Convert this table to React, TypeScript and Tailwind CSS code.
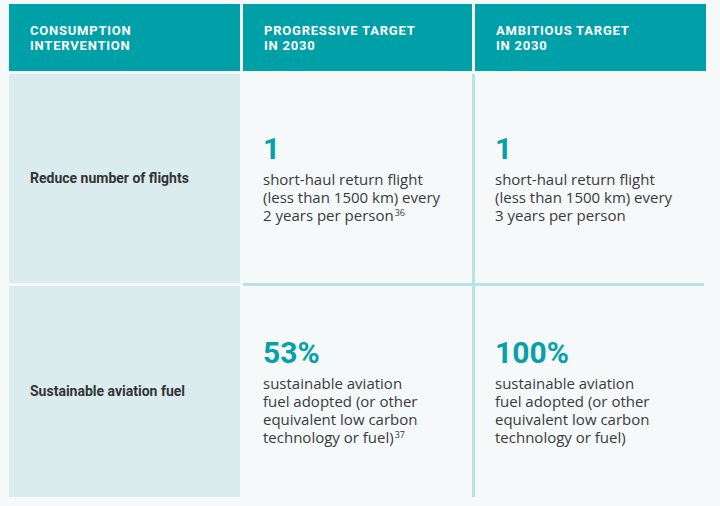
import { Fragment } from "react";

const font = { fontFamily: "Roboto, 'Liberation Sans', sans-serif" };
const body = { fontFamily: "'Open Sans', 'Liberation Sans', sans-serif" };

type Target = { value: string; lines: string[]; note?: string };
type Row = { label: string; progressive: Target; ambitious: Target; height: string };

const rows: Row[] = [
  {
    label: "Reduce number of flights",
    progressive: {
      value: "1",
      lines: ["short-haul return flight", "(less than 1500 km) every", "2 years per person"],
      note: "36",
    },
    ambitious: {
      value: "1",
      lines: ["short-haul return flight", "(less than 1500 km) every", "3 years per person"],
    },
    height: "h-[209px]",
  },
  {
    label: "Sustainable aviation fuel",
    progressive: {
      value: "53%",
      lines: ["sustainable aviation", "fuel adopted (or other", "equivalent low carbon", "technology or fuel)"],
      note: "37",
    },
    ambitious: {
      value: "100%",
      lines: ["sustainable aviation", "fuel adopted (or other", "equivalent low carbon", "technology or fuel)"],
    },
    height: "h-[211px]",
  },
];

const headers = [
  ["Consumption", "intervention"],
  ["Progressive target", "in 2030"],
  ["Ambitious target", "in 2030"],
];

function TargetCell({ value, lines, note }: Target) {
  return (
    <div className="flex h-full flex-col justify-center bg-[#f5f9fa] pl-5 pr-2">
      <div className="text-[30px] font-bold leading-none text-[#05a0a8]">{value}</div>
      <p className="mt-[6px] whitespace-nowrap text-[15px] leading-[18px] text-[#3a3a3a]" style={body}>
        {lines.map((l, i) => (
          <Fragment key={i}>
            {i > 0 && <br />}
            {l}
          </Fragment>
        ))}
        {note && <sup className="ml-px text-[9px]">{note}</sup>}
      </p>
    </div>
  );
}

export default function App() {
  return (
    <div className="h-[506px] w-[720px] bg-[#f5f9fa] pl-[9px] pt-[4px]" style={font}>
      <div className="grid grid-cols-[231px_229px_231px] gap-[3px]">
        {headers.map(([a, b]) => (
          <div key={a} className="flex h-[67px] items-center bg-[#00a0a9] pl-[21px] pr-4">
            <span className="text-[13px] font-bold uppercase leading-[15px] tracking-[0.06em] text-white">
              {a}
              <br />
              {b}
            </span>
          </div>
        ))}
      </div>
      <div className="mt-[3px] grid grid-cols-[231px_461px] gap-[3px]">
        <div className="flex flex-col gap-[3px]">
          {rows.map((r) => (
            <div key={r.label} className={`flex items-center bg-[#dbecef] pl-[21px] ${r.height}`}>
              <span className="text-[14px] font-bold text-[#333333]">{r.label}</span>
            </div>
          ))}
        </div>
        <div className="grid grid-cols-[229px_229px] gap-[3px] bg-[#b6e3e7]">
          {rows.map((r) => [
            <div key={r.label + "p"} className={r.height}>
              <TargetCell {...r.progressive} />
            </div>,
            <div key={r.label + "a"} className={r.height}>
              <TargetCell {...r.ambitious} />
            </div>,
          ])}
        </div>
      </div>
    </div>
  );
}
